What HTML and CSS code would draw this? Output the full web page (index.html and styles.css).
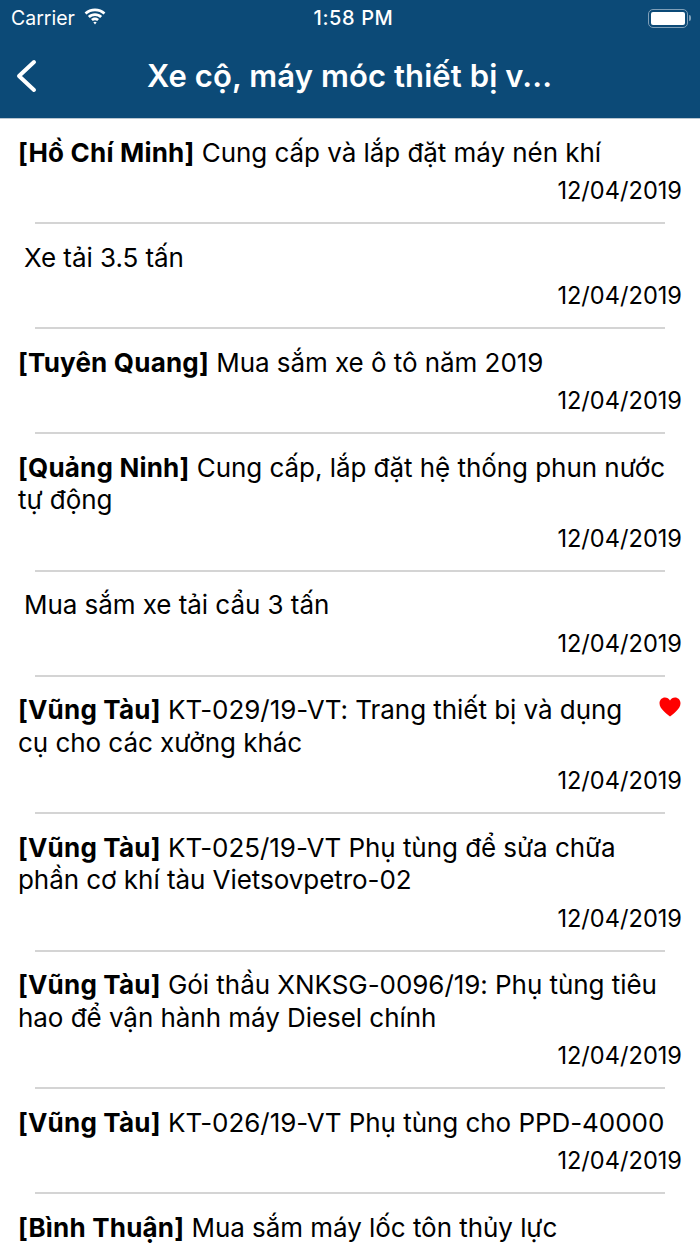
FILE: index.html
```html
<!DOCTYPE html>
<html lang="en">
<head>
    <meta charset="UTF-8">
    <meta name="viewport" content="width=device-width, initial-scale=1.0">
    <title>Xe cộ, máy móc thiết bị</title>
    <link rel="stylesheet" href="styles.css">
</head>
<body>
    <header class="top-bar">
        <div class="status-bar">
            <div class="status-left">
                <span>Carrier</span>
                <svg class="wifi" width="24" height="17" viewBox="0 0 24 17">
                    <path d="M12 3.2c3.3 0 6.3 1.2 8.6 3.3l1.8-2C19.600 1.900 16 .4 12 .4S4.400 1.900 1.600 4.500l1.800 2C5.700 4.400 8.700 3.200 12 3.200z" fill="#fff"/>
                    <path d="M12 8c2 0 3.800.7 5.200 2l1.900-2.100C17.200 6.200 14.700 5.200 12 5.200S6.800 6.200 4.900 7.900L6.800 10c1.400-1.300 3.200-2 5.200-2z" fill="#fff"/>
                    <path d="M12 12.200c.9 0 1.600.3 2.200.8l1.800-2c-1.100-1-2.500-1.600-4-1.600s-2.900.6-4 1.600l1.800 2c.6-.5 1.300-.8 2.200-.8z" fill="#fff"/>
                    <path d="M12 16.400l1.700-2.100c-.5-.3-1.100-.5-1.700-.5s-1.200.2-1.700.5z" fill="#fff"/>
                </svg>
            </div>
            <div class="status-time">1:58 PM</div>
            <div class="status-right">
                <div class="battery"><div class="battery-fill"></div></div>
                <div class="battery-tip"></div>
            </div>
        </div>
        <div class="nav-bar">
            <svg class="back" width="22" height="34" viewBox="0 0 22 34">
                <path d="M19 3L4 17l15 14" fill="none" stroke="#fff" stroke-width="4" stroke-linecap="round" stroke-linejoin="round"/>
            </svg>
            <h1>Xe cộ, máy móc thiết bị v...</h1>
        </div>
    </header>

    <div class="list">
        <div class="item">
            <p class="title"><b>[Hồ Chí Minh]</b> Cung cấp và lắp đặt máy nén khí</p>
            <div class="date">12/04/2019</div>
        </div>
        <div class="item">
            <p class="title no-place">Xe tải 3.5 tấn</p>
            <div class="date">12/04/2019</div>
        </div>
        <div class="item">
            <p class="title"><b>[Tuyên Quang]</b> Mua sắm xe ô tô năm 2019</p>
            <div class="date">12/04/2019</div>
        </div>
        <div class="item">
            <p class="title"><b>[Quảng Ninh]</b> Cung cấp, lắp đặt hệ thống phun nước tự động</p>
            <div class="date">12/04/2019</div>
        </div>
        <div class="item">
            <p class="title no-place">Mua sắm xe tải cẩu 3 tấn</p>
            <div class="date">12/04/2019</div>
        </div>
        <div class="item">
            <svg class="heart" width="22" height="20" viewBox="0 0 22 20">
                <path d="M11 19.500C8 16.800 .5 12 .5 6.200 .5 2.900 3 .5 6 .5c2.100 0 3.900 1 5 2.900C12.100 1.500 13.900.5 16 .5c3 0 5.500 2.400 5.500 5.700C21.500 12 14 16.800 11 19.500z" fill="#ff0000"/>
            </svg>
            <p class="title has-heart"><b>[Vũng Tàu]</b> KT-029/19-VT: Trang thiết bị và dụng cụ cho các xưởng khác</p>
            <div class="date">12/04/2019</div>
        </div>
        <div class="item">
            <p class="title"><b>[Vũng Tàu]</b> KT-025/19-VT Phụ tùng để sửa chữa phần cơ khí tàu Vietsovpetro-02</p>
            <div class="date">12/04/2019</div>
        </div>
        <div class="item">
            <p class="title"><b>[Vũng Tàu]</b> Gói thầu XNKSG-0096/19: Phụ tùng tiêu hao để vận hành máy Diesel chính</p>
            <div class="date">12/04/2019</div>
        </div>
        <div class="item">
            <p class="title"><b>[Vũng Tàu]</b> KT-026/19-VT Phụ tùng cho PPD-40000</p>
            <div class="date">12/04/2019</div>
        </div>
        <div class="item">
            <p class="title"><b>[Bình Thuận]</b> Mua sắm máy lốc tôn thủy lực</p>
        </div>
    </div>
</body>
</html>
```

FILE: styles.css
```css
html, body {
    height: 100%;
    overflow: hidden;
}

body {
    font-family: Inter, "Liberation Sans", sans-serif;
    background-color: #fff;
    color: #000;
    margin: 0;
    padding: 0;
}

.top-bar {
    height: 118px;
    background-color: #0c4a77;
    color: #fff;
    border-bottom: 1px solid #b9c6d0;
}

.status-bar {
    height: 36px;
    padding: 0 9px 0 11px;
    display: grid;
    grid-template-columns: 1fr auto 1fr;
    align-items: center;
    font-size: 19.500px;
}

.status-left {
    display: flex;
    align-items: center;
    gap: 8px;
}

.wifi {
    margin-top: -3px;
}

.status-time {
    margin-left: 5px;
    font-size: 20px;
    font-weight: 500;
    letter-spacing: 0.6px;
}

.status-right {
    display: flex;
    align-items: center;
    justify-content: flex-end;
    gap: 1px;
}

.battery {
    width: 40px;
    height: 19px;
    box-sizing: border-box;
    border: 1.500px solid #7f9fb8;
    border-radius: 5px;
    padding: 2px;
}

.battery-fill {
    height: 100%;
    background-color: #fff;
    border-radius: 2px;
}

.battery-tip {
    width: 2px;
    height: 6px;
    background-color: #7f9fb8;
    border-radius: 0 2px 2px 0;
}

.nav-bar {
    height: 82px;
    display: flex;
    align-items: center;
    padding-left: 15px;
    padding-bottom: 3px;
    box-sizing: border-box;
}

.back {
    flex: none;
}

.nav-bar h1 {
    margin: 0 0 0 110px;
    font-size: 31px;
    font-weight: 600;
    letter-spacing: 0.1px;
    white-space: nowrap;
}

.item {
    position: relative;
    padding: 17.500px 18px 17px;
}

.item::after {
    content: "";
    position: absolute;
    left: 35px;
    right: 35px;
    bottom: 0;
    height: 2px;
    background-color: #d4d4d4;
}

.title {
    margin: 0;
    font-size: 26px;
    line-height: 32.500px;
    letter-spacing: -0.05px;
}

.title b {
    font-weight: 700;
    letter-spacing: 0.2px;
}

.no-place {
    padding-left: 6px;
}

.has-heart {
    padding-right: 40px;
}

.date {
    margin-top: 6px;
    text-align: right;
    font-size: 23.600px;
    line-height: 32px;
}

.heart {
    position: absolute;
    top: 20px;
    right: 19px;
}
```
